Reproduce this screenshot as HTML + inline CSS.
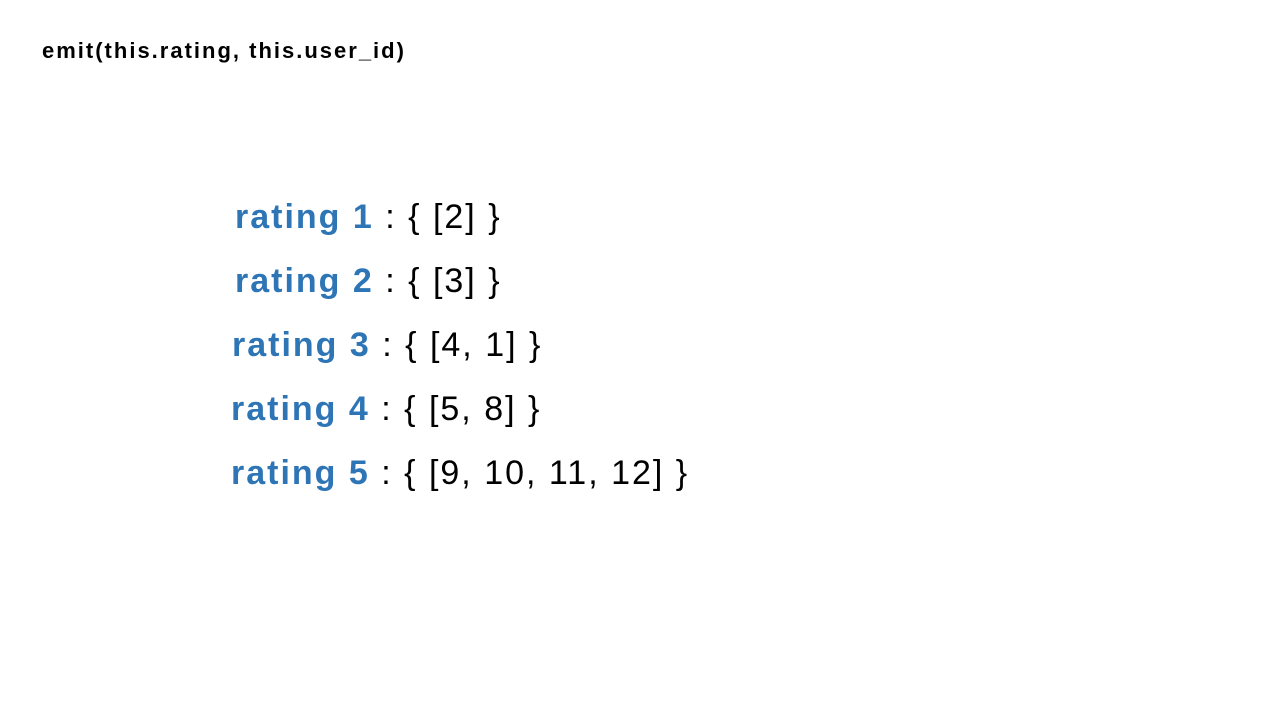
<!DOCTYPE html>
<html><head><meta charset="utf-8"><style>
body{margin:0;width:1280px;height:720px;background:#fff;position:relative;overflow:hidden;font-family:"Liberation Sans","Noto Sans CJK KR",sans-serif}
.t{position:absolute;left:42px;top:38px;font-size:22px;font-weight:bold;color:#000;white-space:nowrap;letter-spacing:2px}
.l{position:absolute;font-size:34px;color:#000;white-space:nowrap;line-height:40px;letter-spacing:2px}
.l b{color:#2E75B6}
</style></head><body>
<div class="t">emit(this.rating, this.user_id)</div>
<div class="l" style="left:235px;top:197px"><b>rating 1</b> : { [2] }</div>
<div class="l" style="left:235px;top:261px"><b>rating 2</b> : { [3] }</div>
<div class="l" style="left:232px;top:325px"><b>rating 3</b> : { [4, 1] }</div>
<div class="l" style="left:231px;top:389px"><b>rating 4</b> : { [5, 8] }</div>
<div class="l" style="left:231px;top:453px"><b>rating 5</b> : { [9, 10, 11, 12] }</div>
</body></html>
